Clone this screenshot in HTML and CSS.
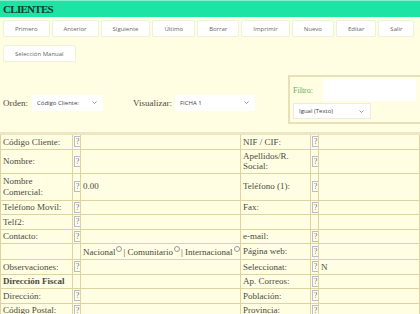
FILE: index.html
```html
<!DOCTYPE html>
<html lang="es">
<head>
  <meta charset="UTF-8" />
  <title>Clientes</title>
  <link rel="stylesheet" href="styles.css">
</head>
<body>
  <div class="titlebar">CLIENTES</div>

  <div class="toolbar">
    <button>Primero</button>
    <button>Anterior</button>
    <button>Siguiente</button>
    <button>Último</button>
    <button>Borrar</button>
    <button>Imprimir</button>
    <button>Nuevo</button>
    <button>Editar</button>
    <button>Salir</button>
    <button>Selección Manual</button>
  </div>

  <div class="options">
    <div class="view-opts">
      <span>Orden:</span>
      <div class="select sel-orden"><span>Código Cliente:</span><svg class="chev" width="5" height="3" viewBox="0 0 5 3"><polyline points="0.5,0.5 2.5,2.5 4.5,0.5" fill="none" stroke="#777" stroke-width="0.8"/></svg></div>
      <span class="lbl-vis">Visualizar:</span>
      <div class="select sel-ficha"><span>FICHA 1</span><svg class="chev" width="5" height="3" viewBox="0 0 5 3"><polyline points="0.5,0.5 2.5,2.5 4.5,0.5" fill="none" stroke="#777" stroke-width="0.8"/></svg></div>
    </div>

    <div class="filter-box">
      <div class="filter-row">
        <span class="filter-lbl">Filtro:</span>
        <div class="filter-input"></div>
      </div>
      <div class="filter-row">
        <div class="select sel-igual"><span>Igual (Texto)</span><svg class="chev" width="5" height="3" viewBox="0 0 5 3"><polyline points="0.5,0.5 2.5,2.5 4.5,0.5" fill="none" stroke="#777" stroke-width="0.8"/></svg></div>
      </div>
    </div>
  </div>

  <table class="ficha">
    <colgroup>
      <col class="c-lbl"><col class="c-help"><col class="c-val">
      <col class="c-lbl2"><col class="c-help"><col>
    </colgroup>
    <tr>
      <td>Código Cliente:</td><td><span class="help">?</span></td><td></td>
      <td>NIF / CIF:</td><td><span class="help">?</span></td><td></td>
    </tr>
    <tr>
      <td>Nombre:</td><td><span class="help">?</span></td><td></td>
      <td>Apellidos/R. Social:</td><td><span class="help">?</span></td><td></td>
    </tr>
    <tr class="tall">
      <td>Nombre Comercial:</td><td><span class="help">?</span></td><td>0.00</td>
      <td>Teléfono (1):</td><td><span class="help">?</span></td><td></td>
    </tr>
    <tr>
      <td>Teléfono Movil:</td><td><span class="help">?</span></td><td></td>
      <td>Fax:</td><td><span class="help">?</span></td><td></td>
    </tr>
    <tr>
      <td>Telf2:</td><td><span class="help">?</span></td><td></td>
      <td></td><td></td><td></td>
    </tr>
    <tr>
      <td>Contacto:</td><td><span class="help">?</span></td><td></td>
      <td>e-mail:</td><td><span class="help">?</span></td><td></td>
    </tr>
    <tr class="radio-row">
      <td></td><td></td>
      <td class="radios">Nacional<span class="radio"></span>| Comunitario<span class="radio"></span>| Internacional<span class="radio"></span></td>
      <td>Página web:</td><td><span class="help">?</span></td><td></td>
    </tr>
    <tr>
      <td>Observaciones:</td><td><span class="help">?</span></td><td></td>
      <td>Seleccionat:</td><td><span class="help">?</span></td><td>N</td>
    </tr>
    <tr>
      <td class="section">Dirección Fiscal</td><td></td><td></td>
      <td>Ap. Correos:</td><td><span class="help">?</span></td><td></td>
    </tr>
    <tr>
      <td>Dirección:</td><td><span class="help">?</span></td><td></td>
      <td>Población:</td><td><span class="help">?</span></td><td></td>
    </tr>
    <tr>
      <td>Código Postal:</td><td><span class="help">?</span></td><td></td>
      <td>Provincia:</td><td><span class="help">?</span></td><td></td>
    </tr>
  </table>
</body>
</html>
```

FILE: styles.css
```css
body {
  margin: 0;
  background: #fffee3;
  font-family: 'Liberation Serif', serif;
  color: #4a4a40;
  overflow: hidden;
}

.titlebar {
  height: 16px;
  line-height: 17px;
  padding-left: 3px;
  background: #1de3a5;
  border-top: 1px solid #86f0cc;
  color: #083d2c;
  font-size: 11px;
  font-weight: bold;
  letter-spacing: -0.7px;
}

.toolbar {
  display: flex;
  flex-wrap: wrap;
  gap: 8px 2px;
  padding: 3px 3px 0;
}

.toolbar button {
  height: 17px;
  padding: 0 11px;
  background: #fff;
  border: 1px solid #f3f0da;
  border-radius: 2px;
  color: #666;
  font-family: 'Open Sans', sans-serif;
  font-size: 6px;
}

.options {
  display: flex;
  align-items: center;
  margin-top: 13px;
}

.view-opts {
  display: flex;
  align-items: center;
  margin-top: 6px;
  padding-left: 3px;
  font-size: 9px;
}

.select {
  display: flex;
  align-items: center;
  justify-content: space-between;
  height: 16px;
  box-sizing: border-box;
  padding: 0 6px 0 5px;
  background: #fff;
  color: #444;
  font-family: 'Open Sans', sans-serif;
  font-size: 6px;
}

.sel-orden {
  width: 71px;
  margin-left: 4px;
}

.lbl-vis {
  margin-left: 30px;
}

.sel-ficha {
  width: 80px;
  margin-left: 3px;
}

.filter-box {
  margin-left: auto;
  width: 132px;
  box-sizing: border-box;
  border: 2px solid #e8e1b8;
  border-right: none;
  padding: 2px 0 3px 3px;
}

.filter-row {
  display: flex;
  align-items: center;
}

.filter-row + .filter-row {
  margin-top: 2px;
}

.filter-lbl {
  width: 30px;
  color: #6aaa5a;
  font-size: 8px;
}

.filter-input {
  width: 93px;
  height: 22px;
  background: #fff;
}

.sel-igual {
  width: 78px;
  border: 1px solid #efecdc;
}

.ficha {
  width: 100%;
  margin-top: 8px;
  border-collapse: collapse;
  table-layout: fixed;
  font-size: 9px;
  border-top: 3px solid #ece6c4;
}

.ficha td {
  height: 11.5px;
  padding: 1px 2px;
  border: 1px solid #ddd4a2;
  line-height: 10.5px;
  vertical-align: middle;
  overflow: hidden;
}

.ficha tr.tall td {
  height: 24px;
}

.ficha tr.radio-row td {
  height: 13px;
}

.c-lbl { width: 72px; }
.c-help { width: 8px; }
.c-val { width: 160px; }
.c-lbl2 { width: 70px; }

.ficha td:nth-child(2),
.ficha td:nth-child(5) {
  padding: 0 1px;
}

.help {
  display: inline-block;
  width: 5px;
  height: 9px;
  border: 1px solid #b9bbd6;
  color: #6a6fa2;
  font-size: 8px;
  line-height: 9px;
  text-align: center;
  vertical-align: middle;
}

.section {
  font-weight: bold;
  white-space: nowrap;
}

.radios {
  white-space: nowrap;
  padding-left: 1px;
}

.radio {
  display: inline-block;
  width: 4px;
  height: 4px;
  margin: 0 1px;
  border: 1px solid #999;
  border-radius: 50%;
  vertical-align: 3px;
}
```
